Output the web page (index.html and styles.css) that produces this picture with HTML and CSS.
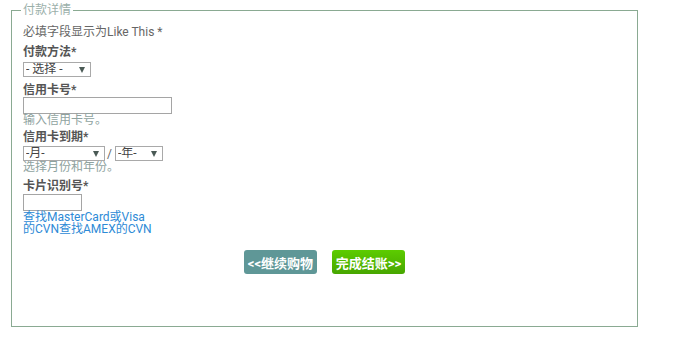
FILE: index.html
```html
<!DOCTYPE html>
<html lang="zh">
<head>
<meta charset="utf-8">
<title>付款详情</title>
<link rel="stylesheet" href="styles.css">
</head>
<body>
<fieldset class="pay">
  <legend class="pay-legend">付款详情</legend>
  <div class="note">必填字段显示为Like This *</div>

  <div class="label first">付款方法*</div>
  <div class="row gap4">
    <span class="sel w68"><select><option>- 选择 -</option></select></span>
  </div>

  <div class="label l2">信用卡号*</div>
  <div class="row gap1"><input class="txt w149" type="text"></div>
  <div class="hint">输入信用卡号。</div>

  <div class="label l3">信用卡到期*</div>
  <div class="row gap3">
    <span class="sel w82"><select><option>-月-</option></select></span>
    <span class="slash">/</span>
    <span class="sel w48"><select><option>-年-</option></select></span>
  </div>
  <div class="hint">选择月份和年份。</div>

  <div class="label l4">卡片识别号*</div>
  <div class="row gap2"><input class="txt w59" type="text"></div>
  <a class="cvn" href="#">查找MasterCard或Visa的CVN查找AMEX的CVN</a>

  <div class="actions">
    <button class="btn back" type="button">&lt;&lt;继续购物</button>
    <button class="btn go" type="button">完成结账&gt;&gt;</button>
  </div>
</fieldset>
</body>
</html>
```

FILE: styles.css
```css
html, body {
  margin: 0;
  padding: 0;
  background: #fff;
}
body {
  font-family: Roboto, "Noto Sans CJK SC", sans-serif;
  font-size: 12px;
  line-height: 12px;
  color: #666;
}
.pay {
  margin: 4px 0 0 11px;
  width: 627px;
  box-sizing: border-box;
  height: 323px;
  border: 1px solid #8aaa92;
  padding: 10px 11px 0 11px;
}
.pay-legend {
  padding: 0 2px;
  margin-left: -2px;
  color: #9bb0aa;
  line-height: 12px;
}
.note { color: #666; }
.label {
  font-weight: bold;
  color: #555;
}
.first { margin-top: 8px; }
.l2 { margin-top: 7px; }
.l3 { margin-top: 5px; }
.l4 { margin-top: 7px; }
.row {
  display: flex;
  align-items: center;
}
.gap4 { margin-top: 4px; }
.gap1 { margin-top: 1px; }
.gap3 { margin-top: 3px; }
.gap2 { margin-top: 2px; }
.sel {
  position: relative;
  display: inline-block;
  height: 15px;
}
.sel select {
  appearance: none;
  -webkit-appearance: none;
  box-sizing: border-box;
  width: 100%;
  height: 15px;
  margin: 0;
  padding: 0 0 0 2px;
  border: 1px solid #a9a9a9;
  border-radius: 0;
  background: #fff;
  font-family: Roboto, "Noto Sans CJK SC", sans-serif;
  font-size: 12px;
  line-height: 13px;
  color: #444;
}
.sel::after {
  content: "";
  position: absolute;
  right: 6px;
  top: 5px;
  border-left: 3px solid transparent;
  border-right: 3px solid transparent;
  border-top: 6px solid #4a5a55;
  pointer-events: none;
}
.w68 { width: 68px; }
.w82 { width: 82px; }
.w48 { width: 48px; }
.slash {
  margin: 0 3px 0 2px;
  color: #666;
}
.txt {
  box-sizing: border-box;
  height: 17px;
  margin: 0;
  padding: 0 2px;
  border: 1px solid #a5a5a5;
  border-radius: 0;
  font-size: 12px;
}
.w149 { width: 149px; }
.w59 { width: 59px; }
.hint { color: #8fa3a0; }
.cvn {
  display: block;
  width: 130px;
  color: #2d8ad6;
  text-decoration: none;
}
.actions {
  display: flex;
  justify-content: center;
  gap: 15px;
  margin-top: 15px;
}
.btn {
  box-sizing: border-box;
  width: 73px;
  height: 24px;
  padding: 0;
  border: 0;
  border-radius: 3px;
  font-family: Roboto, "Noto Sans CJK SC", sans-serif;
  font-size: 13px;
  font-weight: bold;
  color: #fff;
  white-space: nowrap;
}
.back { background: #5f9797; }
.go { background: linear-gradient(#5ccc00, #47a600); }
```
